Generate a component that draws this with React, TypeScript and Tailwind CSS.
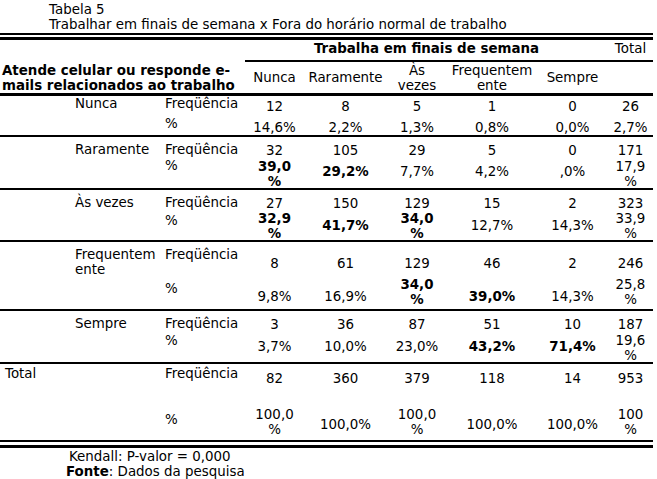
import React from "react";

type V = { t: string; b?: boolean };
type Group = {
  outer?: string;
  label?: string;
  fh: string;
  ph: string;
  flp: string;
  fvp: string;
  plp: string;
  ps: string;
  pd: string;
  freq: string[];
  pct: V[];
  last?: boolean;
};

const W = ["w-[59px]", "w-[83px]", "w-[60px]", "w-[90px]", "w-[71px]", "w-[45px]"];

const headers = ["Nunca", "Raramente", "Às\nvezes", "Frequentem\nente", "Sempre", ""];

const groups: Group[] = [
  {
    label: "Nunca",
    fh: "h-[20px]",
    ph: "h-[19px]",
    flp: "pt-[0px]",
    fvp: "pt-[3px]",
    plp: "pt-[0px]",
    ps: "pt-[4px]",
    pd: "pt-[0px]",
    freq: ["12", "8", "5", "1", "0", "26"],
    pct: [{ t: "14,6%" }, { t: "2,2%" }, { t: "1,3%" }, { t: "0,8%" }, { t: "0,0%" }, { t: "2,7%" }],
  },
  {
    label: "Raramente",
    fh: "h-[20px]",
    ph: "h-[31px]",
    flp: "pt-[5px]",
    fvp: "pt-[6px]",
    plp: "pt-[1px]",
    ps: "pt-[7px]",
    pd: "pt-[2px]",
    freq: ["32", "105", "29", "5", "0", "171"],
    pct: [
      { t: "39,0\n%", b: true },
      { t: "29,2%", b: true },
      { t: "7,7%" },
      { t: "4,2%" },
      { t: ",0%" },
      { t: "17,9\n%" },
    ],
  },
  {
    label: "Às vezes",
    fh: "h-[20px]",
    ph: "h-[30px]",
    flp: "pt-[5px]",
    fvp: "pt-[6px]",
    plp: "pt-[3px]",
    ps: "pt-[8px]",
    pd: "pt-[1px]",
    freq: ["27", "150", "129", "15", "2", "323"],
    pct: [
      { t: "32,9\n%", b: true },
      { t: "41,7%", b: true },
      { t: "34,0\n%", b: true },
      { t: "12,7%" },
      { t: "14,3%" },
      { t: "33,9\n%" },
    ],
  },
  {
    label: "Frequentem\nente",
    fh: "h-[33px]",
    ph: "h-[34px]",
    flp: "pt-[5px]",
    fvp: "pt-[14px]",
    plp: "pt-[6px]",
    ps: "pt-[14px]",
    pd: "pt-[2px]",
    freq: ["8", "61", "129", "46", "2", "246"],
    pct: [
      { t: "9,8%" },
      { t: "16,9%" },
      { t: "34,0\n%", b: true },
      { t: "39,0%", b: true },
      { t: "14,3%" },
      { t: "25,8\n%" },
    ],
  },
  {
    label: "Sempre",
    fh: "h-[20px]",
    ph: "h-[31px]",
    flp: "pt-[5px]",
    fvp: "pt-[6px]",
    plp: "pt-[2px]",
    ps: "pt-[8px]",
    pd: "pt-[2px]",
    freq: ["3", "36", "87", "51", "10", "187"],
    pct: [
      { t: "3,7%" },
      { t: "10,0%" },
      { t: "23,0%" },
      { t: "43,2%", b: true },
      { t: "71,4%", b: true },
      { t: "19,6\n%" },
    ],
  },
  {
    outer: "Total",
    fh: "h-[36px]",
    ph: "h-[40px]",
    flp: "pt-[2px]",
    fvp: "pt-[7px]",
    plp: "pt-[12px]",
    ps: "pt-[17px]",
    pd: "pt-[7px]",
    freq: ["82", "360", "379", "118", "14", "953"],
    pct: [
      { t: "100,0\n%" },
      { t: "100,0%" },
      { t: "100,0\n%" },
      { t: "100,0%" },
      { t: "100,0%" },
      { t: "100\n%" },
    ],
    last: true,
  },
];

function GroupRows({ g }: { g: Group }) {
  return (
    <div className={g.last ? "" : "border-b-2 border-black"}>
      <div className={`flex ${g.fh}`}>
        <div className={`w-[72px] pl-[5px] ${g.flp}`}>{g.outer ?? ""}</div>
        <div className={`w-[92px] pl-[3px] whitespace-pre-line ${g.flp}`}>{g.label ?? ""}</div>
        <div className={`w-[81px] pl-[1px] whitespace-nowrap ${g.flp}`}>Freqüência</div>
        {g.freq.map((v, i) => (
          <div key={i} className={`${W[i]} text-center ${g.fvp}`}>
            {v}
          </div>
        ))}
      </div>
      <div className={`flex ${g.ph}`}>
        <div className="w-[72px]" />
        <div className="w-[92px]" />
        <div className={`w-[81px] pl-[1px] ${g.plp}`}>%</div>
        {g.pct.map((v, i) => (
          <div
            key={i}
            className={`${W[i]} text-center whitespace-pre-line ${v.t.includes("\n") ? g.pd : g.ps} ${
              v.b ? "font-bold" : ""
            }`}
          >
            {v.t}
          </div>
        ))}
      </div>
    </div>
  );
}

export default function App() {
  return (
    <div className="w-[657px] h-[479px] overflow-hidden bg-white text-black font-['DejaVu_Sans',sans-serif] text-[13.4px] leading-[15px]">
      <div className="h-[33px] pt-[2px] pl-[49px] whitespace-nowrap">
        <div>Tabela 5</div>
        <div>Trabalhar em finais de semana x Fora do horário normal de trabalho</div>
      </div>
      <div className="w-[653px]">
        <div className="h-[2px] bg-black" />
        <div className="h-[2px]" />
        <div className="h-[3px] bg-black" />
        <div className="flex">
          <div className="w-[245px] h-[53px] flex items-end pl-[2px] font-bold whitespace-nowrap">
            <div>
              Atende celular ou responde e-
              <br />
              mails relacionados ao trabalho
            </div>
          </div>
          <div className="w-[408px]">
            <div className="flex h-[22px] border-b-2 border-black">
              <div className="w-[363px] text-center font-bold pt-[1px] whitespace-nowrap">
                Trabalha em finais de semana
              </div>
              <div className="w-[45px] text-center pt-[1px]">Total</div>
            </div>
            <div className="flex h-[31px]">
              {headers.map((h, i) => (
                <div
                  key={i}
                  className={`${W[i]} flex items-center justify-center text-center whitespace-pre-line`}
                >
                  {h}
                </div>
              ))}
            </div>
          </div>
        </div>
        <div className="h-[3px] bg-black" />
        {groups.map((g, i) => (
          <GroupRows key={i} g={g} />
        ))}
        <div className="h-[2px] bg-black" />
        <div className="h-[3px]" />
        <div className="h-[3px] bg-black" />
      </div>
      <div className="pt-[1px] pl-[69px]">Kendall: P-valor = 0,000</div>
      <div className="pl-[66px]">
        <span className="font-bold">Fonte</span>: Dados da pesquisa
      </div>
    </div>
  );
}
